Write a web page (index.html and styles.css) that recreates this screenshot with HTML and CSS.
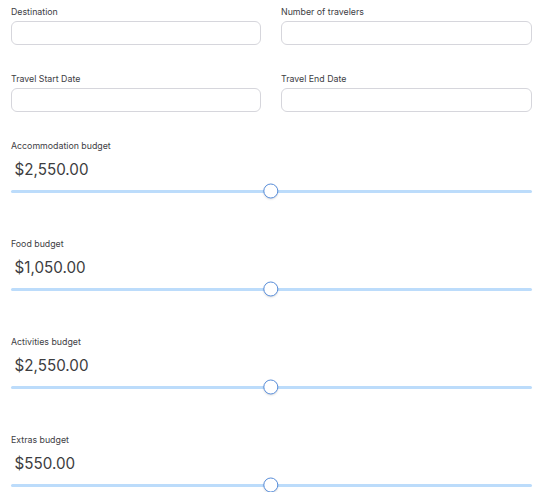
FILE: index.html
```html
<!DOCTYPE html>
<html lang="en">
<head>
<meta charset="utf-8">
<title>Trip budget</title>
<link rel="stylesheet" href="styles.css">
</head>
<body>
<form class="form">
  <div class="grid">
    <div class="field">
      <label class="label">Destination</label>
      <input class="input" type="text">
    </div>
    <div class="field">
      <label class="label">Number of travelers</label>
      <input class="input" type="text">
    </div>
    <div class="field">
      <label class="label">Travel Start Date</label>
      <input class="input" type="text">
    </div>
    <div class="field">
      <label class="label">Travel End Date</label>
      <input class="input" type="text">
    </div>
  </div>

  <div class="slider-block">
    <div class="label">Accommodation budget</div>
    <div class="value">$2,550.00</div>
    <div class="slider"><div class="track"></div><div class="thumb"></div></div>
  </div>
  <div class="slider-block">
    <div class="label">Food budget</div>
    <div class="value">$1,050.00</div>
    <div class="slider"><div class="track"></div><div class="thumb"></div></div>
  </div>
  <div class="slider-block">
    <div class="label">Activities budget</div>
    <div class="value">$2,550.00</div>
    <div class="slider"><div class="track"></div><div class="thumb"></div></div>
  </div>
  <div class="slider-block">
    <div class="label">Extras budget</div>
    <div class="value">$550.00</div>
    <div class="slider"><div class="track"></div><div class="thumb"></div></div>
  </div>
</form>
</body>
</html>
```

FILE: styles.css
```css
* { box-sizing: border-box; }
html, body {
  margin: 0;
  padding: 0;
  background: #ffffff;
  font-family: Inter, "Noto Sans", sans-serif;
  color: #333;
}
.form {
  padding: 6px 11px 0 11px;
}
.grid {
  display: grid;
  grid-template-columns: 250px 251px;
  column-gap: 20px;
  row-gap: 28px;
}
.field {
  display: flex;
  flex-direction: column;
  gap: 3px;
}
.label {
  display: block;
  font-size: 8.8px;
  line-height: 12px;
  color: #404044;
}
.input {
  display: block;
  width: 100%;
  height: 24px;
  margin: 0;
  border: 1px solid #d6d6dc;
  border-radius: 6px;
  background: #fff;
  font: inherit;
  padding: 0 8px;
}
.slider-block {
  display: flex;
  flex-direction: column;
  margin-bottom: 39.5px;
}
.slider-block:last-child {
  margin-bottom: 0;
}
.grid + .slider-block {
  margin-top: 27.5px;
}
.value {
  margin-top: 8.5px;
  padding-left: 3.5px;
  font-size: 15.2px;
  line-height: 20px;
  color: #3d3d40;
}
.slider {
  position: relative;
  margin-top: 4px;
  height: 14px;
  display: flex;
  align-items: center;
}
.track {
  width: 100%;
  height: 3px;
  background: #bcdcfb;
  border-radius: 2px;
}
.thumb {
  position: absolute;
  left: 50%;
  top: 50%;
  width: 15px;
  height: 15px;
  transform: translate(-58%, -50%);
  border-radius: 50%;
  background: #fff;
  border: 1.5px solid #5a8fdb;
  box-shadow: 0 1px 2px rgba(0, 0, 0, 0.12);
}
```
